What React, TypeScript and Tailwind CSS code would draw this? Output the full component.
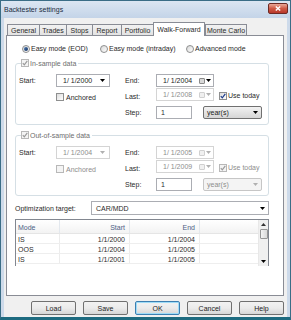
import React from 'react';

const tabs = ['General', 'Trades', 'Stops', 'Report', 'Portfolio', 'Walk-Forward', 'Monte Carlo'];
const tabWidths = [32, 27, 26, 29, 32, 52, 42];

const rows = [
  { mode: 'IS', start: '1/1/2000', end: '1/1/2004' },
  { mode: 'OOS', start: '1/1/2004', end: '1/1/2005' },
  { mode: 'IS', start: '1/1/2001', end: '1/1/2005' },
];

const Arrow: React.FC<{ disabled?: boolean }> = ({ disabled }) => (
  <svg width="5" height="3" viewBox="0 0 5 3" className="shrink-0">
    <path d="M0 0h5L2.5 3z" fill={disabled ? '#b0b0b0' : '#000'} />
  </svg>
);

const Check: React.FC<{ checked?: boolean; disabled?: boolean }> = ({ checked, disabled }) => (
  <span
    className={`flex items-center justify-center w-[8px] h-[8px] shrink-0 border ${
      disabled ? 'border-[#b8b8b8] bg-[#f4f4f4]' : 'border-[#8e8f8f] bg-gradient-to-br from-[#dcdcdc] to-white'
    }`}
  >
    {checked && (
      <svg width="6" height="6" viewBox="0 0 6 6">
        <path
          d="M0.8 3.2 2.3 4.8 5.3 0.8"
          fill="none"
          stroke={disabled ? '#9a9a9a' : '#1e3c8c'}
          strokeWidth="1.2"
        />
      </svg>
    )}
  </span>
);

const Radio: React.FC<{ checked?: boolean }> = ({ checked }) => (
  <span className="flex items-center justify-center w-[8px] h-[8px] rounded-full border border-[#8e8f8f] bg-gradient-to-br from-[#d8d8d8] to-white shrink-0">
    {checked && <span className="w-[4px] h-[4px] rounded-full bg-gradient-to-br from-[#4f7fb8] to-[#152f5c]" />}
  </span>
);

const DateField: React.FC<{ value: string; disabled?: boolean; picker?: boolean; width: string }> = ({
  value,
  disabled,
  picker,
  width,
}) => (
  <div
    className={`flex items-center h-[13px] ${width} border bg-white pl-[6px] pr-[2px] ${
      disabled ? 'border-[#d4d4d4] text-[#8d8d8d]' : 'border-[#abadb3] text-[#222]'
    }`}
  >
    <span className="flex-1 whitespace-pre">{value}</span>
    {picker ? (
      <span className="flex items-center gap-[1px]">
        <span
          className={`w-[6px] h-[6px] border rounded-[1px] ${
            disabled ? 'border-[#d0d0d0] bg-[#f0f0f0]' : 'border-[#8a8a8a] bg-[#d8d8d8]'
          }`}
        />
        <Arrow disabled={disabled} />
      </span>
    ) : (
      <span className="pr-[2px]">
        <Arrow disabled={disabled} />
      </span>
    )}
  </div>
);

const ComboButton: React.FC<{ value: string; disabled?: boolean; width: string }> = ({ value, disabled, width }) => (
  <div
    className={`flex items-center h-[13px] ${width} border rounded-[2px] pl-[3px] pr-[3px] ${
      disabled
        ? 'border-[#c6c6c6] bg-[#f4f4f4] text-[#8d8d8d]'
        : 'border-[#707070] bg-gradient-to-b from-[#f2f2f2] to-[#d6d6d6] text-[#222]'
    }`}
  >
    <span className="flex-1">{value}</span>
    <Arrow disabled={disabled} />
  </div>
);

const GroupBox: React.FC<{
  title: string;
  disabled?: boolean;
  start: string;
  end: string;
  last: string;
  className: string;
}> = ({ title, disabled, start, end, last, className }) => (
  <div className={`relative border border-[#d5dfe5] rounded-[3px] ${className}`}>
    <div className="absolute -top-[5px] left-[5px] flex items-center gap-[1px] bg-white pr-[2px] text-[#6d6d6d]">
      <Check checked disabled />
      <span>{title}</span>
    </div>
    <div className="flex flex-col pt-[10px] pl-[3px]">
      <div className="flex items-center h-[13px]">
        <span className="w-[37px]">Start:</span>
        <DateField value={start} disabled={disabled} width="w-[54px]" />
        <span className="w-[15px]" />
        <span className="w-[31px]">End:</span>
        <DateField value={end} disabled={disabled} picker width="w-[58px]" />
      </div>
      <div className="flex items-center h-[13px] mt-[1px]">
        <span className="w-[37px]" />
        <span className={`flex items-center gap-[2px] w-[54px] mt-[5px] ${disabled ? 'text-[#8d8d8d]' : ''}`}>
          <Check disabled={disabled} />
          Anchored
        </span>
        <span className="w-[15px]" />
        <span className="w-[31px] mt-[4px]">Last:</span>
        <DateField value={last} disabled picker width="w-[58px]" />
        <span className={`flex items-center gap-[1px] ml-[5px] mt-[2px] ${disabled ? 'text-[#8d8d8d]' : ''}`}>
          <Check checked disabled={disabled} />
          Use today
        </span>
      </div>
      <div className="flex items-center h-[13px] mt-[5px]">
        <span className="w-[106px]" />
        <span className="w-[31px]">Step:</span>
        <div className="flex items-center h-[13px] w-[36px] border border-[#abadb3] bg-white pl-[4px]">1</div>
        <span className="w-[11px]" />
        <ComboButton value="year(s)" disabled={disabled} width="w-[59px]" />
      </div>
    </div>
  </div>
);

const Button: React.FC<{ label: string; focused?: boolean }> = ({ label, focused }) => (
  <div
    className={`flex items-center justify-center w-[45px] h-[14px] rounded-[2px] border ${
      focused ? 'border-[#3c7fb1] shadow-[inset_0_0_0_1px_#9fdcf7]' : 'border-[#707070]'
    } bg-gradient-to-b from-[#f2f2f2] via-[#ebebeb] to-[#d6d6d6] text-[#222]`}
  >
    {label}
  </div>
);

export default function App() {
  return (
    <div className="w-[291px] h-[320px] flex flex-col bg-[#cddaea] border border-[#3a6d86] border-b-[3px] border-b-[#1e6b80] font-['Liberation_Sans',Arial,sans-serif] text-[7px] leading-none text-[#2a2a2a] overflow-hidden">
      <div className="flex items-center justify-between h-[17px] pl-[3px] pr-[2px] bg-gradient-to-b from-[#dbe6f2] to-[#c4d4e8]">
        <span className="text-[7px] text-[#1b2c3f]">Backtester settings</span>
        <div className="flex items-center justify-center w-[20px] h-[11px] -mt-[3px] rounded-[2px] border border-[#6d2a24] bg-gradient-to-b from-[#e9a898] via-[#cf5a45] to-[#b8362a]">
          <svg width="6" height="5" viewBox="0 0 6 5">
            <path d="M0.8 0.5 5.2 4.5M5.2 0.5 0.8 4.5" stroke="#fff" strokeWidth="1.4" />
          </svg>
        </div>
      </div>
      <div className="flex flex-col flex-1 mx-[3px] bg-[#f0f0f0] pl-[2px] pr-[3px] pt-[3px]">
        <div className="flex items-end h-[14px] pl-[1px]">
          {tabs.map((t, i) => {
            const active = t === 'Walk-Forward';
            return (
              <div
                key={t}
                style={{ width: tabWidths[i] }}
                className={
                  active
                    ? 'relative z-10 flex items-center justify-center h-[14px] -mb-px border border-b-0 border-[#898c95] bg-white rounded-t-[1px]'
                    : 'flex items-center justify-center h-[11px] border border-b-0 border-r-0 last:border-r border-[#898c95] bg-gradient-to-b from-[#f2f2f2] to-[#e3e3e3]'
                }
              >
                {t}
              </div>
            );
          })}
        </div>
        <div className="flex flex-col h-[261px] border border-[#898c95] bg-white pl-[8px]">
          <div className="flex items-center h-[9px] mt-[8px] pl-[7px]">
            <span className="flex items-center gap-[1px] w-[78px]">
              <Radio checked />
              Easy mode (EOD)
            </span>
            <span className="flex items-center gap-[1px] w-[86px]">
              <Radio />
              Easy mode (intraday)
            </span>
            <span className="flex items-center gap-[1px]">
              <Radio />
              Advanced mode
            </span>
          </div>
          <GroupBox
            title="In-sample data"
            start="1/ 1/2000"
            end="1/ 1/2004"
            last="1/ 1/2008"
            className="w-[254px] h-[62px] mt-[10px]"
          />
          <GroupBox
            title="Out-of-sample data"
            disabled
            start="1/ 1/2004"
            end="1/ 1/2005"
            last="1/ 1/2009"
            className="w-[254px] h-[61px] mt-[10px]"
          />
          <div className="flex items-center h-[14px] mt-[5px] w-[254px]">
            <span className="w-[76px]">Optimization target:</span>
            <div className="flex items-center flex-1 h-[14px] border border-[#abadb3] bg-white pl-[4px] pr-[3px]">
              <span className="flex-1">CAR/MDD</span>
              <Arrow />
            </div>
          </div>
          <div className="flex w-[254px] h-[47px] mt-[4px] border border-[#828790] border-b-0 bg-white overflow-hidden">
            <div className="flex flex-col flex-1">
              <div className="flex h-[14px] border-b border-[#e5e5e5] bg-gradient-to-b from-white to-[#f3f3f3] text-[#4d6185]">
                <span className="w-[44px] pl-[2px] pt-[4px] border-r border-[#e3e8ee]">Mode</span>
                <span className="w-[70px] pr-[4px] pt-[4px] text-right border-r border-[#e3e8ee]">Start</span>
                <span className="w-[70px] pr-[4px] pt-[4px] text-right border-r border-[#e3e8ee]">End</span>
                <span className="flex-1" />
              </div>
              {rows.map((r, i) => (
                <div key={i} className="flex h-[10px] border-b border-[#eeeeee]">
                  <span className="w-[44px] pl-[2px] pt-[2px] border-r border-[#ececec]">{r.mode}</span>
                  <span className="w-[70px] pr-[4px] pt-[2px] text-right border-r border-[#ececec]">{r.start}</span>
                  <span className="w-[70px] pr-[4px] pt-[2px] text-right border-r border-[#ececec]">{r.end}</span>
                  <span className="flex-1" />
                </div>
              ))}
            </div>
            <div className="flex flex-col items-center w-[10px] bg-[#f0f0f0] border-l border-[#e8e8e8]">
              <div className="flex items-center justify-center h-[9px]">
                <svg width="5" height="3" viewBox="0 0 5 3">
                  <path d="M0 3h5L2.5 0z" fill="#333" />
                </svg>
              </div>
              <div className="w-[8px] h-[10px] rounded-[1px] border border-[#969696] bg-gradient-to-r from-[#f4f4f4] to-[#d9d9d9]" />
              <div className="flex-1" />
              <div className="flex items-center justify-center h-[9px]">
                <Arrow />
              </div>
            </div>
          </div>
        </div>
        <div className="flex items-center justify-end gap-[7px] h-[14px] mt-[5px]">
          <Button label="Load" />
          <Button label="Save" />
          <Button label="OK" focused />
          <Button label="Cancel" />
          <Button label="Help" />
        </div>
      </div>
    </div>
  );
}
